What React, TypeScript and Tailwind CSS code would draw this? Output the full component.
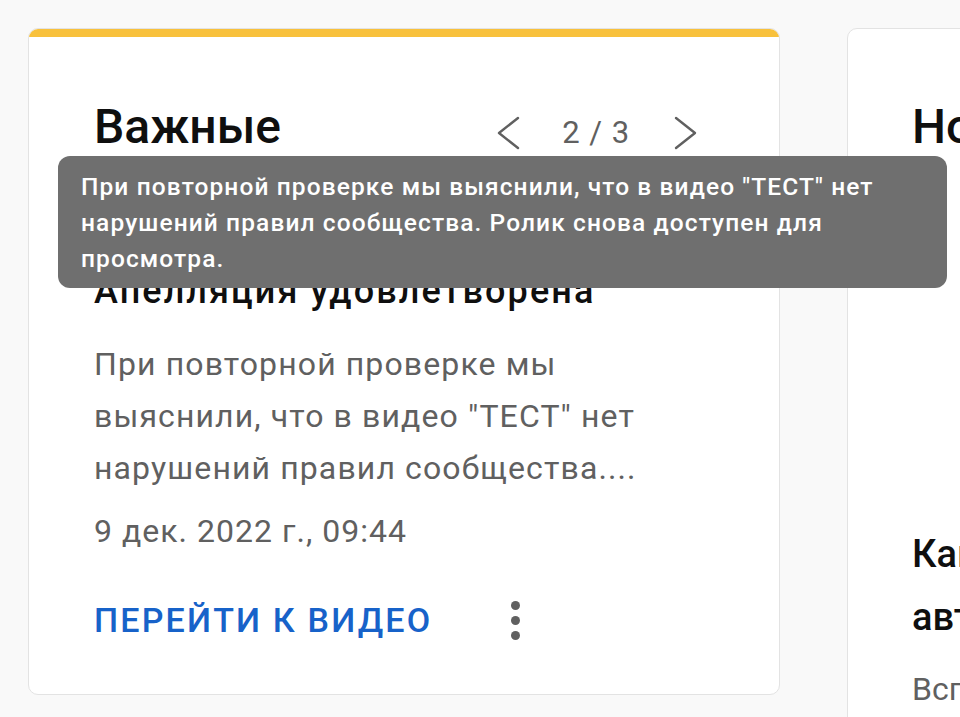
import React from "react"

function Chevron({ dir }: { dir: "left" | "right" }) {
  return (
    <svg width="24" height="34" viewBox="0 0 24 34" fill="none" stroke="#606060" strokeWidth="2.4" strokeLinecap="round" strokeLinejoin="round">
      {dir === "left" ? <path d="M22 2 L3 17 L22 32" /> : <path d="M2 2 L21 17 L2 32" />}
    </svg>
  )
}

function MoreDots() {
  return (
    <div className="flex flex-col items-center gap-[6px]">
      <span className="block h-[9px] w-[9px] rounded-full bg-[#606060]" />
      <span className="block h-[9px] w-[9px] rounded-full bg-[#606060]" />
      <span className="block h-[9px] w-[9px] rounded-full bg-[#606060]" />
    </div>
  )
}

export default function App() {
  return (
    <div className="relative h-[717px] w-[960px] overflow-hidden bg-[#f9f9f9] font-[Roboto,'Noto_Sans',sans-serif]">
      <div className="flex gap-[67px] pl-[28px] pt-[28px]">
        {/* important notices card */}
        <div className="flex h-[667px] w-[752px] shrink-0 flex-col overflow-hidden rounded-[10px] border border-[#e3e3e3] bg-white">
          <div className="h-[8px] bg-[#f8c13c]" />
          <div className="flex flex-1 flex-col pl-[65px] pr-[66px] pt-[59px]">
            <div className="flex items-start">
              <h2 className="w-[390px] text-[48px] font-medium leading-[62px] text-[#0f0f0f]">Важные уведомления</h2>
              <div className="ml-auto mr-[9px] mt-[17px] flex items-center">
                <div className="flex w-[30px] justify-start"><Chevron dir="left" /></div>
                <span className="ml-[36px] text-[31px] leading-[40px] tracking-[0.03em] text-[#606060]">2 / 3</span>
                <div className="ml-[44px] flex w-[30px] justify-start"><Chevron dir="right" /></div>
              </div>
            </div>

            <h3 className="mt-[47px] text-[36px] font-medium leading-[48px] tracking-[0.058em] text-[#0f0f0f]">Апелляция удовлетворена</h3>

            <p className="mt-[23px] text-[32px] leading-[52px] tracking-[0.035em] text-[#606060]">
              <span className="block">При повторной проверке мы</span>
              <span className="block">выяснили, что в видео "ТЕСТ" нет</span>
              <span className="block">нарушений правил сообщества....</span>
            </p>
            <p className="mt-[11px] text-[32px] leading-[52px] tracking-[0.032em] text-[#606060]">9 дек. 2022 г., 09:44</p>

            <div className="mt-[43px] flex items-center">
              <span className="text-[34px] font-medium leading-[40px] tracking-[0.064em] text-[#1762c9]">ПЕРЕЙТИ К ВИДЕО</span>
              <div className="ml-[79px]"><MoreDots /></div>
            </div>
          </div>
        </div>

        {/* next card, cut off by the window */}
        <div className="h-[720px] w-[500px] shrink-0 rounded-[10px] border border-[#e3e3e3] bg-white pl-[64px] pt-[67px]">
          <h2 className="whitespace-nowrap text-[48px] font-medium leading-[62px] text-[#0f0f0f]">Новости</h2>
          <div className="h-[365px]" />
          <h3 className="whitespace-nowrap text-[38px] font-medium leading-[63px] text-[#0f0f0f]">
            <span className="block">Как настроить</span>
            <span className="block">автоматические субтитры</span>
          </h3>
          <p className="mt-[14px] whitespace-nowrap text-[32px] leading-[52px] text-[#606060]">Вспомогательный текст</p>
        </div>
      </div>

      {/* tooltip over the card */}
      <div className="absolute left-[58px] top-[156px] w-[889px] rounded-[12px] bg-[#6f6f6f] pb-[11px] pl-[23px] pr-[16px] pt-[13px] text-[24.5px] font-medium leading-[36px] tracking-[0.045em] text-white">
        <span className="block whitespace-nowrap">При повторной проверке мы выяснили, что в видео "ТЕСТ" нет</span>
        <span className="block whitespace-nowrap">нарушений правил сообщества. Ролик снова доступен для</span>
        <span className="block">просмотра.</span>
      </div>
    </div>
  )
}
